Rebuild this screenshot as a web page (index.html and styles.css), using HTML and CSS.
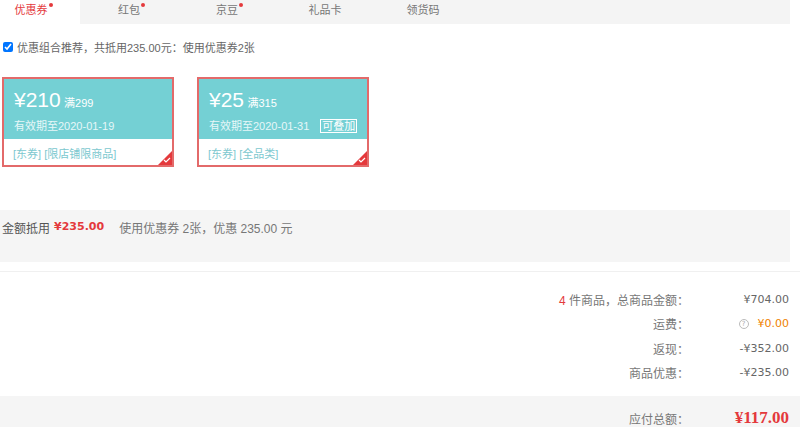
FILE: index.html
```html
<!DOCTYPE html>
<html lang="zh-CN">

<head>
    <meta charset="UTF-8">
    <meta name="viewport" content="width=device-width, initial-scale=1.0">
    <title>结算 - 优惠券</title>
    <link rel="stylesheet" href="styles.css">
</head>

<body>
    <div class="page">
        <ul class="tabs">
            <li class="tab active">优惠券<i class="dot"></i></li>
            <li class="tab">红包<i class="dot"></i></li>
            <li class="tab">京豆<i class="dot"></i></li>
            <li class="tab">礼品卡</li>
            <li class="tab">领货码</li>
        </ul>

        <label class="combo">
            <input type="checkbox" checked>
            <span>优惠组合推荐，共抵用235.00元：使用优惠券2张</span>
        </label>

        <div class="coupons">
            <div class="coupon">
                <div class="coupon_top">
                    <p class="coupon_price"><span class="big">¥210</span> <span class="cond">满299</span></p>
                    <p class="coupon_date">有效期至2020-01-19</p>
                </div>
                <div class="coupon_bottom">[东券] [限店铺限商品]</div>
                <span class="corner">
                    <svg width="8" height="6" viewBox="0 0 8 6"><path d="M1 3 L3 5 L7 1" fill="none" stroke="#fff" stroke-width="1.2"/></svg>
                </span>
            </div>
            <div class="coupon">
                <div class="coupon_top">
                    <p class="coupon_price"><span class="big">¥25</span> <span class="cond">满315</span></p>
                    <p class="coupon_date">有效期至2020-01-31 <span class="stack">可叠加</span></p>
                </div>
                <div class="coupon_bottom">[东券] [全品类]</div>
                <span class="corner">
                    <svg width="8" height="6" viewBox="0 0 8 6"><path d="M1 3 L3 5 L7 1" fill="none" stroke="#fff" stroke-width="1.2"/></svg>
                </span>
            </div>
        </div>

        <div class="used">
            <b class="used_label">金额抵用</b>
            <b class="used_amount">¥235.00</b>
            <span class="used_note">使用优惠券 2张，优惠 235.00 元</span>
        </div>
    </div>

    <div class="totals">
        <div class="row">
            <span class="label"><em>4</em> 件商品，总商品金额：</span>
            <span class="value">¥704.00</span>
        </div>
        <div class="row">
            <span class="label">运费：</span>
            <span class="value"><span class="help">?</span><span class="free">¥0.00</span></span>
        </div>
        <div class="row">
            <span class="label">返现：</span>
            <span class="value">-¥352.00</span>
        </div>
        <div class="row">
            <span class="label">商品优惠：</span>
            <span class="value">-¥235.00</span>
        </div>
    </div>

    <div class="pay">
        <span class="label">应付总额：</span>
        <span class="value pay_amount">¥117.00</span>
    </div>
</body>

</html>
```

FILE: styles.css
```css
* {
    box-sizing: border-box;
}

body {
    margin: 0;
    width: 800px;
    font-family: "Liberation Sans", "Noto Sans CJK SC", sans-serif;
    font-size: 12px;
    color: #666;
    background: #fff;
    overflow: hidden;
}

p {
    margin: 0;
}

.page {
    width: 790px;
}

.tabs {
    display: flex;
    margin: 0;
    padding: 0;
    list-style: none;
    height: 24px;
    background: #f4f4f4;
    margin-left: -18px;
}

.tab {
    position: relative;
    width: 98px;
    line-height: 20px;
    font-size: 11px;
    text-align: center;
    color: #777;
}

.tab.active {
    background: #fff;
    color: #e4393c;
}

.dot {
    position: absolute;
    width: 4px;
    height: 4px;
    margin-left: 1px;
    margin-top: 3px;
    border-radius: 50%;
    background: #e4393c;
}

.combo {
    display: flex;
    align-items: center;
    gap: 4px;
    margin: 15px 0 0 3px;
    font-size: 11px;
    color: #666;
}

.combo input {
    width: 10px;
    height: 10px;
    margin: 0;
}

.coupons {
    display: flex;
    gap: 23px;
    margin: 22px 0 0 2px;
}

.coupon {
    position: relative;
    width: 172px;
    height: 90px;
    border: 2px solid #e36a6a;
    overflow: hidden;
}

.coupon_top {
    height: 60px;
    padding: 10px 0 0 10px;
    background: #74d0d4;
    color: #fff;
}

.coupon_price {
    line-height: 22px;
}

.big {
    font-size: 21px;
}

.cond {
    font-size: 11px;
}

.coupon_date {
    margin-top: 3px;
    font-size: 11px;
    color: #e6f7f8;
}

.stack {
    margin-left: 8px;
    padding: 0 1px;
    border: 1px solid #fff;
    color: #fff;
}

.coupon_bottom {
    padding: 6px 0 0 9px;
    font-size: 11px;
    color: #7cc8cf;
}

.corner {
    position: absolute;
    right: 0;
    bottom: 0;
    width: 0;
    height: 0;
    border-left: 14px solid transparent;
    border-bottom: 14px solid #e4393c;
}

.corner svg {
    position: absolute;
    right: 1px;
    top: 6px;
}

.used {
    display: flex;
    align-items: flex-start;
    height: 52px;
    margin-top: 43px;
    padding: 9px 0 0 2px;
    background: #f5f5f5;
}

.used_label {
    font-weight: normal;
    color: #555;
}

.used_amount {
    margin-left: 4px;
    font-family: "DejaVu Sans", sans-serif;
    font-size: 11px;
    line-height: 15px;
    color: #e4393c;
}

.used_note {
    margin-left: 15px;
    color: #777;
}

.totals {
    margin-top: 9px;
    padding-top: 15px;
    border-top: 1px solid #f0f0f0;
}

.row {
    display: flex;
    justify-content: flex-end;
    height: 24.5px;
    align-items: center;
    padding-right: 11px;
}

.label {
    color: #777;
    text-align: right;
}

.label em {
    font-style: normal;
    color: #e4393c;
}

.value {
    width: 100px;
    text-align: right;
    font-family: "DejaVu Sans", sans-serif;
    font-size: 11px;
    color: #666;
}

.help {
    display: inline-block;
    width: 10px;
    height: 10px;
    margin-right: 9px;
    border: 1px solid #bbb;
    border-radius: 50%;
    font-size: 7px;
    line-height: 8px;
    text-align: center;
    color: #aaa;
    vertical-align: 1px;
}

.free {
    color: #f08200;
}

.pay {
    display: flex;
    justify-content: flex-end;
    align-items: center;
    width: 800px;
    height: 36px;
    margin-top: 11px;
    padding: 8px 11px 0 0;
    background: #f5f5f5;
}

.pay_amount {
    font-family: "Liberation Serif", serif;
    font-weight: bold;
    font-size: 17px;
    line-height: 20px;
    color: #e4393c;
}
```
